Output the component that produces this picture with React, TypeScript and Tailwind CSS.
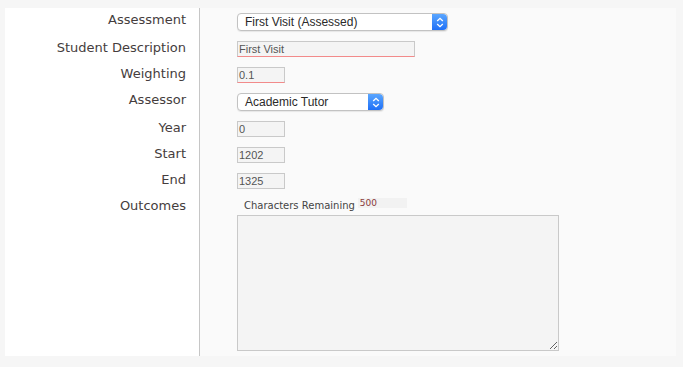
import React from "react";

const labelFont = { fontFamily: '"DejaVu Sans", Verdana, sans-serif' };

function Stepper() {
  return (
    <div className="flex h-full w-[15px] items-center justify-center rounded-r-[4px] bg-gradient-to-b from-[#5aa6ff] to-[#1e6ff6]">
      <svg width="8" height="11" viewBox="0 0 8 11" fill="none">
        <path d="M1.2 4 L4 1.3 L6.8 4" stroke="white" strokeWidth="1.3" />
        <path d="M1.2 7 L4 9.7 L6.8 7" stroke="white" strokeWidth="1.3" />
      </svg>
    </div>
  );
}

function Select({ value, width }: { value: string; width: string }) {
  return (
    <div
      className={`flex h-[18px] ${width} items-stretch rounded-[4px] border border-[#c2c2c2] bg-white shadow-[0_1px_1px_rgba(0,0,0,0.08)]`}
    >
      <div
        className="flex flex-1 items-center pl-[7px] text-[12px] text-[#2a2a2a]"
        style={{ fontFamily: '"Liberation Sans", Arial, sans-serif' }}
      >
        {value}
      </div>
      <Stepper />
    </div>
  );
}

function Input({ value, width, red }: { value: string; width: string; red?: boolean }) {
  return (
    <div
      className={`flex h-[16px] ${width} items-center border border-[#c9c9c9] bg-[#f4f4f4] pl-[1px] text-[11px] text-[#555] ${
        red ? "border-b-[#f28a8a]" : ""
      }`}
      style={{ fontFamily: '"Liberation Sans", Arial, sans-serif' }}
    >
      {value}
    </div>
  );
}

const labelCls =
  "w-[195px] shrink-0 border-r border-[#c6c6c6] bg-white pr-[13px] pt-[3px] text-right text-[13px] leading-[17px] text-[#453d3d]";

function Row({ label, h, children }: { label: string; h: string; children: React.ReactNode }) {
  return (
    <div className={`flex ${h}`}>
      <div className={labelCls} style={labelFont}>
        {label}
      </div>
      <div className="flex-1 pl-[37px] pt-[5px]">{children}</div>
    </div>
  );
}

export default function App() {
  return (
    <div className="h-[367px] w-[683px] bg-[#f6f6f6] pl-[5px] pt-[8px]">
      <div className="flex h-[348px] w-[671px] flex-col bg-[#fafafa]">
        <Row label="Assessment" h="h-[28px]">
          <Select value="First Visit (Assessed)" width="w-[211px]" />
        </Row>
        <Row label="Student Description" h="h-[26px]">
          <Input value="First Visit" width="w-[178px]" red />
        </Row>
        <Row label="Weighting" h="h-[26px]">
          <Input value="0.1" width="w-[48px]" red />
        </Row>
        <Row label="Assessor" h="h-[28px]">
          <Select value="Academic Tutor" width="w-[147px]" />
        </Row>
        <Row label="Year" h="h-[26px]">
          <Input value="0" width="w-[48px]" />
        </Row>
        <Row label="Start" h="h-[26px]">
          <Input value="1202" width="w-[48px]" />
        </Row>
        <Row label="End" h="h-[26px]">
          <Input value="1325" width="w-[48px]" />
        </Row>
        <div className="flex flex-1">
          <div className={labelCls} style={labelFont}>
            Outcomes
          </div>
          <div className="flex flex-1 flex-col pl-[37px] pt-[4px]">
            <div className="flex h-[17px] items-start pl-[7px]">
              <span className="pt-[1px] text-[10px] leading-[14px] text-[#444]" style={labelFont}>
                Characters Remaining
              </span>
              <span
                className="ml-[3px] h-[10px] w-[49px] bg-[#f2f2f2] pl-[2px] text-[9px] leading-[10px] text-[#8a3b3b]"
                style={labelFont}
              >
                500
              </span>
            </div>
            <textarea
              readOnly
              className="h-[136px] w-[322px] border border-[#c9c9c9] bg-[#f4f4f4] outline-none"
            />
          </div>
        </div>
      </div>
    </div>
  );
}
